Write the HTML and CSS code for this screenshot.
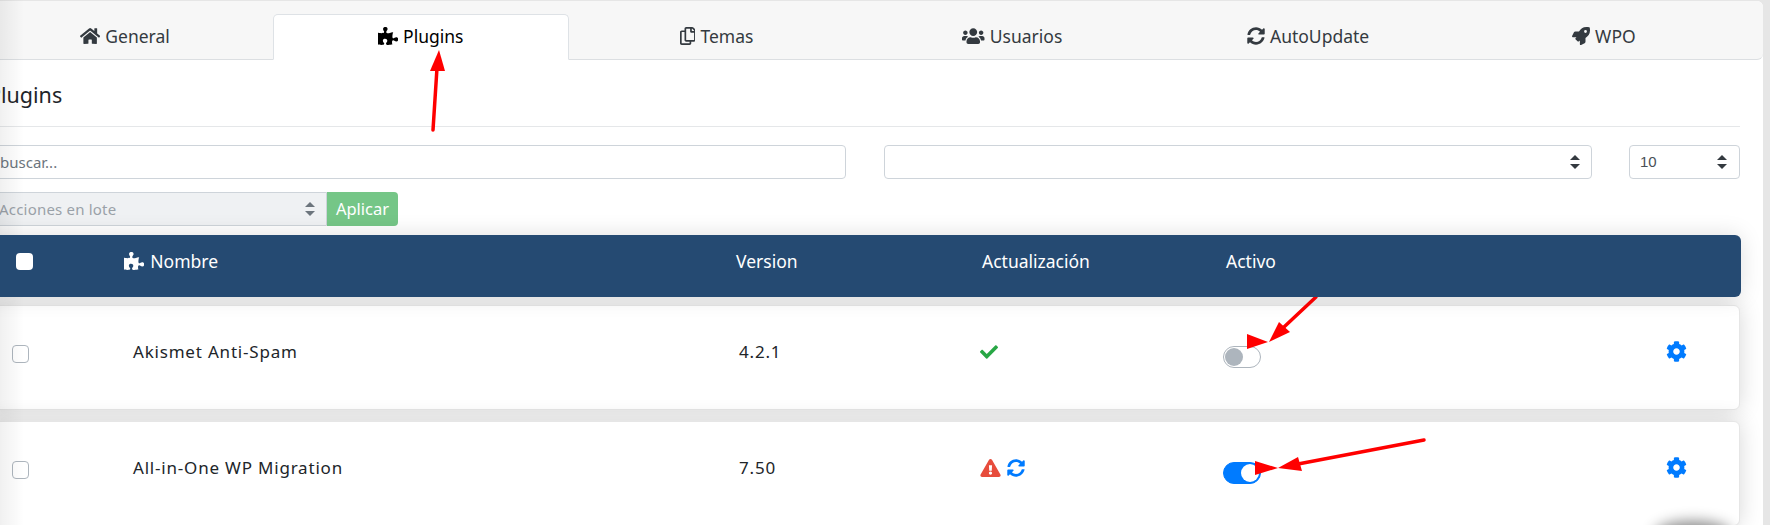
FILE: index.html
```html
<!DOCTYPE html>
<html lang="es">
<head>
<meta charset="utf-8">
<title>Plugins</title>
<link rel="stylesheet" href="styles.css">
</head>
<body>
<svg class="defs" aria-hidden="true">
  <defs>
    <path id="home" d="M280.37 148.26L96 300.11V464a16 16 0 0 0 16 16l112.06-.29a16 16 0 0 0 15.92-16V368a16 16 0 0 1 16-16h64a16 16 0 0 1 16 16v95.64a16 16 0 0 0 16 16.05L464 480a16 16 0 0 0 16-16V300L295.67 148.26a12.19 12.19 0 0 0-15.3 0zM571.6 251.47L488 182.56V44.05a12 12 0 0 0-12-12h-56a12 12 0 0 0-12 12v72.61L318.47 43a48 48 0 0 0-61 0L4.34 251.47a12 12 0 0 0-1.6 16.9l25.5 31A12 12 0 0 0 45.15 301l235.22-193.74a12.19 12.19 0 0 1 15.3 0L530.9 301a12 12 0 0 0 16.9-1.6l25.5-31a12 12 0 0 0-1.7-16.93z"/>
    <path id="puzzle" d="M519.442 288.651c-41.519 0-59.5 31.593-82.058 31.593C377.409 320.244 432 144 432 144s-196.288 80-196.288-3.297c0-35.827 36.288-46.25 36.288-85.985C272 19.216 243.885 0 210.539 0c-34.654 0-66.366 18.891-66.366 56.346 0 41.364 31.711 59.277 31.711 81.75C175.885 207.719 0 166.758 0 166.758v333.237s178.635 41.047 178.635-28.662c0-22.473-40-40.107-40-81.471 0-37.456 29.25-56.346 63.577-56.346 33.673 0 61.788 19.216 61.788 54.717 0 39.735-36.288 50.158-36.288 85.985 0 60.803 129.675 25.73 181.23 25.73 0 0-34.725-120.101 25.827-120.101 35.962 0 46.423 36.152 86.308 36.152C556.712 416 576 387.99 576 354.443c0-34.199-18.962-65.792-56.558-65.792z"/>
    <path id="copy" d="M433.941 65.941l-51.882-51.882A48 48 0 0 0 348.118 0H176c-26.51 0-48 21.49-48 48v48H48c-26.51 0-48 21.49-48 48v320c0 26.51 21.49 48 48 48h224c26.51 0 48-21.49 48-48v-48h80c26.51 0 48-21.49 48-48V99.882a48 48 0 0 0-14.059-33.941zM266 464H54a6 6 0 0 1-6-6V150a6 6 0 0 1 6-6h74v224c0 26.51 21.49 48 48 48h96v42a6 6 0 0 1-6 6zm128-96H182a6 6 0 0 1-6-6V54a6 6 0 0 1 6-6h106v88c0 13.255 10.745 24 24 24h88v202a6 6 0 0 1-6 6zm6-256h-64V48h9.632c1.591 0 3.117.632 4.243 1.757l48.368 48.368a6 6 0 0 1 1.757 4.243V112z"/>
    <path id="users" d="M96 224c35.3 0 64-28.7 64-64s-28.7-64-64-64-64 28.7-64 64 28.7 64 64 64zm448 0c35.3 0 64-28.7 64-64s-28.7-64-64-64-64 28.7-64 64 28.7 64 64 64zm32 32h-64c-17.6 0-33.5 7.1-45.1 18.6 40.3 22.1 68.9 62 75.1 109.4h66c17.7 0 32-14.3 32-32v-32c0-35.3-28.7-64-64-64zm-256 0c61.9 0 112-50.1 112-112S381.9 32 320 32 208 82.1 208 144s50.1 112 112 112zm76.8 32h-8.3c-20.8 10-43.9 16-68.5 16s-47.6-6-68.5-16h-8.3C179.6 288 128 339.6 128 403.2V432c0 26.5 21.5 48 48 48h288c26.5 0 48-21.5 48-48v-28.8c0-63.6-51.6-115.2-115.2-115.2zm-223.7-13.4C161.5 263.1 145.6 256 128 256H64c-35.3 0-64 28.7-64 64v32c0 17.7 14.3 32 32 32h65.9c6.3-47.4 34.9-87.3 75.2-109.4z"/>
    <path id="sync" d="M370.72 133.28C339.458 104.008 298.888 87.962 255.848 88c-77.458.068-144.328 53.178-162.791 126.85-1.344 5.363-6.122 9.15-11.651 9.15H24.103c-7.498 0-13.194-6.807-11.807-14.176C33.933 94.924 134.813 8 256 8c66.448 0 126.791 26.136 171.315 68.685L463.03 40.97C478.149 25.851 504 36.559 504 57.941V192c0 13.255-10.745 24-24 24H345.941c-21.382 0-32.09-25.851-16.971-40.971l41.75-41.749zM32 296h134.059c21.382 0 32.09 25.851 16.971 40.971l-41.75 41.75c31.262 29.273 71.835 45.319 114.876 45.28 77.418-.07 144.315-53.144 162.787-126.849 1.344-5.363 6.122-9.15 11.651-9.15h57.304c7.498 0 13.194 6.807 11.807 14.176C478.067 417.076 377.187 504 256 504c-66.448 0-126.791-26.136-171.315-68.685L48.97 471.03C33.851 486.149 8 475.441 8 454.059V320c0-13.255 10.745-24 24-24z"/>
    <path id="rocket" d="M505.12019,19.09375c-1.18945-5.53125-6.65819-11-12.207-12.1875C460.716,0,435.507,0,410.40747,0,307.17523,0,245.26909,55.20312,199.05238,128H94.83772c-16.34763.01562-35.55658,11.875-42.88664,26.48438L2.51562,253.29688A28.4,28.4,0,0,0,0,264a24.00867,24.00867,0,0,0,24.00582,24H127.81618l-22.47457,22.46875c-11.36521,11.36133-12.99607,32.25781,0,45.25L156.24582,406.625c11.15623,11.1875,32.15619,13.15625,45.27726,0l22.47457-22.46875V488a24.00867,24.00867,0,0,0,24.00581,24,28.55934,28.55934,0,0,0,10.707-2.51562l98.72834-49.39063c14.62888-7.29687,26.50776-26.5,26.50776-42.85937V312.79688c72.59753-46.3125,128.03493-108.40626,128.03493-211.09376C512.07526,76.5,512.07526,51.29688,505.12019,19.09375ZM384.04033,168A40,40,0,1,1,424.05,128,40.02322,40.02322,0,0,1,384.04033,168Z"/>
    <path id="check" d="M173.898 439.404l-166.4-166.4c-9.997-9.997-9.997-26.206 0-36.204l36.203-36.204c9.997-9.998 26.207-9.998 36.204 0L192 312.69 432.095 72.596c9.997-9.997 26.207-9.997 36.204 0l36.203 36.204c9.997 9.997 9.997 26.206 0 36.204l-294.4 294.401c-9.998 9.997-26.207 9.997-36.204-.001z"/>
    <path id="warn" d="M569.517 440.013C587.975 472.007 564.806 512 527.94 512H48.054c-36.937 0-59.999-40.055-41.577-71.987L246.423 23.985c18.467-32.009 64.72-31.951 83.154 0l239.94 416.028zM288 354c-25.405 0-46 20.595-46 46s20.595 46 46 46 46-20.595 46-46-20.595-46-46-46zm-43.673-165.346l7.418 136c.347 6.364 5.609 11.346 11.982 11.346h48.546c6.373 0 11.635-4.982 11.982-11.346l7.418-136c.375-6.874-5.098-12.654-11.982-12.654h-63.383c-6.884 0-12.356 5.78-11.981 12.654z"/>
    <path id="cog" d="M487.4 315.7l-42.6-24.6c4.3-23.2 4.3-47 0-70.2l42.6-24.6c4.9-2.8 7.1-8.6 5.5-14-11.1-35.6-30-67.8-54.7-94.6-3.8-4.1-10-5.1-14.8-2.3L380.8 110c-17.9-15.4-38.5-27.3-60.8-35.1V25.8c0-5.6-3.9-10.5-9.4-11.7-36.7-8.2-74.3-7.8-109.2 0-5.5 1.2-9.4 6.1-9.4 11.7V75c-22.2 7.9-42.8 19.8-60.8 35.1L88.7 85.5c-4.9-2.8-11-1.9-14.8 2.3-24.7 26.7-43.6 58.9-54.7 94.6-1.7 5.4.6 11.2 5.5 14L67.3 221c-4.3 23.2-4.3 47 0 70.2l-42.6 24.6c-4.9 2.8-7.1 8.6-5.5 14 11.1 35.6 30 67.8 54.7 94.6 3.8 4.1 10 5.1 14.8 2.3l42.6-24.6c17.9 15.4 38.5 27.3 60.8 35.1v49.2c0 5.6 3.9 10.5 9.4 11.7 36.7 8.2 74.3 7.8 109.2 0 5.5-1.2 9.4-6.1 9.4-11.7v-49.2c22.2-7.9 42.8-19.8 60.8-35.1l42.6 24.6c4.9 2.8 11 1.9 14.8-2.3 24.7-26.7 43.6-58.9 54.7-94.6 1.5-5.5-.7-11.3-5.6-14.1zM256 336c-44.1 0-80-35.9-80-80s35.9-80 80-80 80 35.9 80 80-35.9 80-80 80z"/>
    <g id="updown"><path d="M5 0L10 5H0z"/><path d="M5 14L0 9H10z"/></g>
  </defs>
</svg>

<main class="card">
  <nav class="tabs">
    <a class="tab"><svg class="ic" viewBox="0 0 576 512"><use href="#home"/></svg>General</a>
    <a class="tab active"><svg class="ic" viewBox="0 0 576 512"><use href="#puzzle"/></svg>Plugins</a>
    <a class="tab"><svg class="ic" viewBox="0 0 448 512"><use href="#copy"/></svg>Temas</a>
    <a class="tab"><svg class="ic" viewBox="0 0 640 512"><use href="#users"/></svg>Usuarios</a>
    <a class="tab"><svg class="ic" viewBox="0 0 512 512"><use href="#sync"/></svg>AutoUpdate</a>
    <a class="tab"><svg class="ic" viewBox="0 0 512 512"><use href="#rocket"/></svg>WPO</a>
  </nav>

  <section class="content">
    <h1 class="title">Plugins</h1>

    <div class="filters">
      <input class="field search" type="text" placeholder="buscar...">
      <div class="field select"><span></span><svg class="updown" viewBox="0 0 10 14"><use href="#updown"/></svg></div>
      <div class="field select count"><span>10</span><svg class="updown" viewBox="0 0 10 14"><use href="#updown"/></svg></div>
    </div>

    <div class="bulk">
      <div class="field select disabled"><span>Acciones en lote</span><svg class="updown" viewBox="0 0 10 14"><use href="#updown"/></svg></div>
      <button class="apply" type="button">Aplicar</button>
    </div>

    <div class="thead">
      <span class="hcheck"></span>
      <span class="hname"><svg class="ic" viewBox="0 0 576 512"><use href="#puzzle"/></svg>Nombre</span>
      <span>Version</span>
      <span>Actualización</span>
      <span>Activo</span>
    </div>

    <div class="row">
      <input class="check" type="checkbox">
      <span>Akismet Anti-Spam</span>
      <span>4.2.1</span>
      <span class="status"><svg class="ok" viewBox="0 0 512 512"><use href="#check"/></svg></span>
      <span class="toggle"></span>
      <svg class="gear" viewBox="0 0 512 512"><use href="#cog"/></svg>
    </div>

    <div class="row">
      <input class="check" type="checkbox">
      <span>All-in-One WP Migration</span>
      <span>7.50</span>
      <span class="status"><svg class="alert" viewBox="0 0 576 512"><use href="#warn"/></svg><svg class="refresh" viewBox="0 0 512 512"><use href="#sync"/></svg></span>
      <span class="toggle on"></span>
      <svg class="gear" viewBox="0 0 512 512"><use href="#cog"/></svg>
    </div>
  </section>
</main>

<div class="edge-shade"></div>
<div class="float-shadow"></div>

<svg class="arrows" viewBox="0 0 1770 525" aria-hidden="true">
  <g class="arrow-line">
    <line x1="433" y1="130" x2="437" y2="68"/>
    <line x1="1316" y1="297" x2="1284" y2="327"/>
    <line x1="1424" y1="440" x2="1298" y2="464"/>
  </g>
  <g class="arrow-head">
    <polygon points="439,50 430,71 445,71"/>
    <polygon points="1269,342 1279,322 1290,332"/>
    <polygon points="1247,334 1247,349 1268,342"/>
    <polygon points="1278,468 1298,457 1302,471"/>
    <polygon points="1255,461 1255,475 1278,468"/>
  </g>
</svg>
</body>
</html>
```
FILE: styles.css
```css
* { box-sizing: border-box; }

html, body {
  margin: 0;
  height: 525px;
  overflow: hidden;
}

body {
  background: #e6e6e6;
  padding-top: 1px;
  font-family: "Noto Sans", sans-serif;
  font-size: 17.5px;
  line-height: 24px;
  color: #212529;
  position: relative;
}

.defs { position: absolute; width: 0; height: 0; }

.card {
  width: 1787px;
  margin-left: -24px;
  height: 524px;
  background: #fff;
  border-top-right-radius: 6px;
  overflow: hidden;
}

.tabs {
  display: flex;
  height: 59px;
  padding: 13px 0 0 1px;
  background: #f7f7f7;
  border-bottom: 1px solid #dcdfe2;
  border-bottom-right-radius: 6px;
}

.tab {
  flex: 0 0 295.8px;
  height: 46px;
  display: flex;
  align-items: center;
  justify-content: center;
  gap: 5px;
  padding-bottom: 2px;
  color: #343a40;
  border: 1px solid transparent;
  border-radius: 5px 5px 0 0;
}

.tab.active {
  background: #fff;
  border-color: #dee2e6 #dee2e6 #fff;
  color: #000;
}

.ic { height: 18px; fill: currentColor; flex: none; }

.content { padding: 0 23px 0 12px; }

.title {
  margin: 0;
  height: 67px;
  padding-top: 21px;
  font-size: 21.5px;
  line-height: 27px;
  font-weight: 400;
  color: #212529;
  border-bottom: 1px solid #e5e7e9;
}

.filters {
  display: flex;
  justify-content: space-between;
  margin-top: 18px;
}

.field {
  height: 34px;
  border: 1px solid #ced4da;
  border-radius: 4px;
  background: #fff;
  font: inherit;
  font-size: 15px;
  color: #495057;
  padding: 0 11px;
}

.search { width: 858px; outline: none; }
.search::placeholder { color: #6c757d; opacity: 1; }

.select {
  width: 708px;
  display: flex;
  align-items: center;
  justify-content: space-between;
}

.count {
  width: 111px;
  padding: 0 12px 0 10px;
  font-family: "Liberation Sans", sans-serif;
}

.updown { width: 10px; height: 14px; fill: #343a40; flex: none; }

.bulk { display: flex; margin-top: 13px; }

.disabled {
  width: 339px;
  background: #eff1f3;
  color: #9aa1a8;
  border-radius: 4px 0 0 4px;
  padding-left: 10px;
  letter-spacing: .2px;
}
.disabled .updown { fill: #6c757d; }

.apply {
  width: 71px;
  height: 34px;
  border: 0;
  border-radius: 0 4px 4px 0;
  background: #75c687;
  color: #fff;
  font: inherit;
  font-size: 16.5px;
}

.thead {
  display: grid;
  grid-template-columns: 136px 612px 246px 244px 1fr;
  align-items: start;
  height: 62px;
  margin-top: 9px;
  padding-top: 14px;
  background: #254a72;
  color: #fff;
  border-radius: 0 6px 6px 0;
  position: relative;
  z-index: 1;
  margin-right: -1px;
  box-shadow: 0 0 22px rgba(0, 0, 0, .13);
}

.hcheck {
  width: 17px;
  height: 17px;
  margin: 4px 0 0 28px;
  background: #fff;
  border-radius: 4px;
}

.hname { display: flex; align-items: center; gap: 6px; }

.row {
  display: grid;
  grid-template-columns: 144px 606px 241px 243px 443px 21px;
  align-items: start;
  height: 105px;
  padding-top: 34px;
  background: #fff;
  border: 1px solid #e6e6e6;
  border-radius: 6px;
  box-shadow: 0 0 22px rgba(0, 0, 0, .16);
  font-size: 17px;
  letter-spacing: .8px;
}

.thead + .row { margin-top: 8px; }
.row + .row { margin-top: 11px; }

.check {
  appearance: none;
  width: 17px;
  height: 18px;
  margin: 5px 0 0 23px;
  background: #fff;
  border: 1px solid #adb5bd;
  border-radius: 4px;
}

.status { display: flex; gap: 6px; margin-top: 3px; }
.ok { width: 18px; height: 18px; fill: #28a745; }
.alert { width: 21px; height: 18px; fill: #e74c3c; }
.refresh { width: 18px; height: 18px; fill: #007bff; }

.toggle {
  position: relative;
  width: 38px;
  height: 22px;
  margin-top: 6px;
  border: 1px solid #adb5bd;
  border-radius: 11px;
  background: #fff;
}

.toggle::after {
  content: "";
  position: absolute;
  top: 1px;
  left: 1px;
  width: 18px;
  height: 18px;
  border-radius: 50%;
  background: #adb5bd;
}

.toggle.on { background: #007bff; border-color: #007bff; }
.toggle.on::after { left: 17px; background: #fff; }

.gear { width: 21px; height: 21px; fill: #007bff; margin-top: 1px; }

.edge-shade {
  position: absolute;
  top: 0;
  left: 0;
  bottom: 0;
  width: 24px;
  background: linear-gradient(to right, rgba(0, 0, 0, .06), rgba(0, 0, 0, 0));
  pointer-events: none;
}

.float-shadow {
  position: absolute;
  left: 1660px;
  bottom: -18px;
  width: 66px;
  height: 16px;
  border-radius: 50%;
  box-shadow: 0 0 14px 6px rgba(0, 0, 0, .45);
}

.arrows {
  position: absolute;
  top: 0;
  left: 0;
  width: 1770px;
  height: 525px;
  pointer-events: none;
}

.arrow-line { stroke: #f00; stroke-width: 3.5; stroke-linecap: round; }
.arrow-head { fill: #f00; }
```
